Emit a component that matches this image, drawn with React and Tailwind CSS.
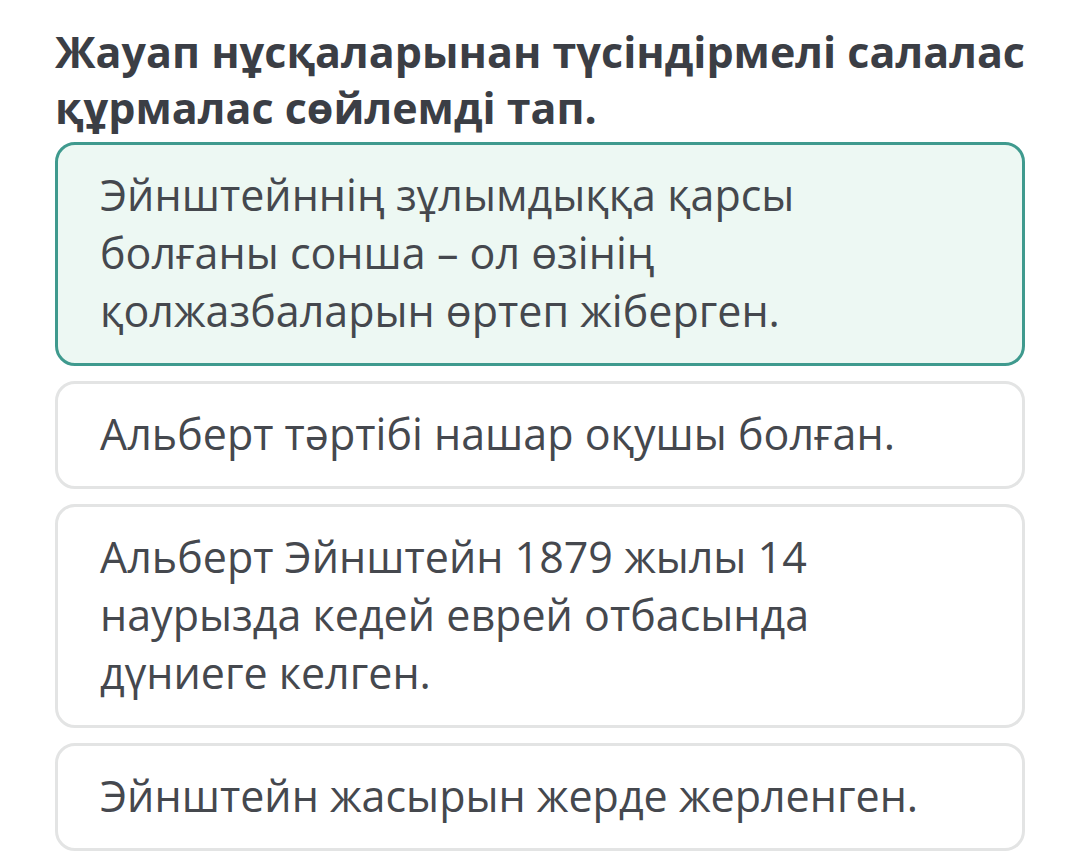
export default function App() {
  const options = [
    {
      id: 1,
      text: 'Эйнштейннің зұлымдыққа қарсы болғаны сонша – ол өзінің қолжазбаларын өртеп жіберген.',
      selected: true,
    },
    { id: 2, text: 'Альберт тәртібі нашар оқушы болған.' },
    {
      id: 3,
      text: 'Альберт Эйнштейн 1879 жылы 14 наурызда кедей еврей отбасында дүниеге келген.',
    },
    { id: 4, text: 'Эйнштейн жасырын жерде жерленген.' },
  ];

  return (
    <div
      className="min-h-[868px] bg-white pt-[24px] pl-[55px] pr-[55px]"
      style={{ fontFamily: '"Open Sans", "Noto Sans", sans-serif' }}
    >
      <h1 className="text-[43px] leading-[56px] font-bold text-[#3b3e45] mb-[6px] whitespace-nowrap">
        Жауап нұсқаларынан түсіндірмелі салалас
        <br />
        құрмалас сөйлемді тап.
      </h1>

      <div className="flex flex-col gap-[15px] w-[970px]">
        {options.map(opt => (
          <div
            key={opt.id}
            className={
              opt.selected
                ? 'rounded-[20px] border-[3px] border-[#3f9a8e] bg-[#edf8f3] pt-[21px] pb-[23px] pl-[42px] pr-[92px]'
                : 'rounded-[20px] border-[3px] border-[#e3e4e4] bg-white pt-[21px] pb-[23px] pl-[42px] pr-[92px]'
            }
          >
            <p className="text-[43px] leading-[58px] text-[#45484e]">{opt.text}</p>
          </div>
        ))}
      </div>
    </div>
  );
}
